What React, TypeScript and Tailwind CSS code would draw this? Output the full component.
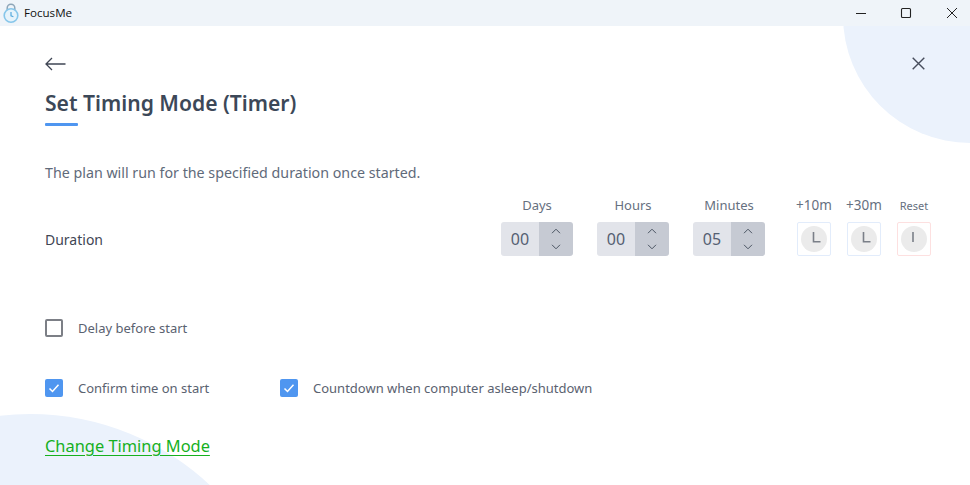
import React from "react";

const font = { fontFamily: '"Noto Sans", "Open Sans", sans-serif' };

function Spinner({ label, value }: { label: string; value: string }) {
  return (
    <div className="flex flex-col items-center w-[72px]">
      <div className="text-[13px] leading-[18px] text-[#667080] h-[18px] mb-[8px]">{label}</div>
      <div className="flex w-[72px] h-[34px] rounded-[3px] overflow-hidden">
        <div className="w-[38px] bg-[#e2e4ea] flex items-center justify-center text-[16px] text-[#556072]">{value}</div>
        <div className="w-[34px] bg-[#c6cad3] flex flex-col items-center justify-center gap-[10px]">
          <svg width="10" height="6" viewBox="0 0 10 6" fill="none" stroke="#4b5563" strokeWidth="1"><path d="M1 5.2 5 1.2 9 5.2" /></svg>
          <svg width="10" height="6" viewBox="0 0 10 6" fill="none" stroke="#4b5563" strokeWidth="1"><path d="M1 .8 5 4.8 9 .8" /></svg>
        </div>
      </div>
    </div>
  );
}

function Quick({ label, kind, small }: { label: string; kind: "l" | "i"; small?: boolean }) {
  const border = kind === "i" ? "border-[#fde0e0]" : "border-[#e2ecfb]";
  return (
    <div className="flex flex-col items-center w-[34px]">
      <div className={`h-[18px] mb-[8px] whitespace-nowrap leading-[18px] text-[#667080] ${small ? "text-[11px] pt-[1px]" : "text-[13.5px]"}`}>{label}</div>
      <div className={`w-[34px] h-[34px] border ${border} rounded-[2px] flex items-center justify-center`}>
        <div className="w-[26px] h-[26px] rounded-full bg-[#ebebeb] flex items-center justify-center">
          <svg width="26" height="26" viewBox="0 0 26 26" fill="none" stroke="#7a7f88" strokeWidth="1.6">
            {kind === "l" ? <path d="M12.5 6v9.7h7" /> : <path d="M12 6v10" />}
          </svg>
        </div>
      </div>
    </div>
  );
}

function Check({ checked }: { checked: boolean }) {
  return checked ? (
    <div className="w-[18px] h-[18px] rounded-[2px] bg-[#4f96f0] flex items-center justify-center shrink-0">
      <svg width="12" height="12" viewBox="0 0 12 12" fill="none" stroke="#ffffff" strokeWidth="1.5"><path d="M1.5 6.5 4.5 9.5 10.5 2.8" /></svg>
    </div>
  ) : (
    <div className="w-[18px] h-[18px] rounded-[2px] border-2 border-[#7c7f86] bg-white shrink-0" />
  );
}

export default function App() {
  return (
    <div className="relative w-[970px] h-[485px] bg-white overflow-hidden flex flex-col" style={font}>
      <div className="absolute left-[843px] top-[-111px] w-[254px] h-[254px] rounded-full bg-[#ebf2fc]" />
      <div className="absolute left-[-233px] top-[414px] w-[526px] h-[526px] rounded-full bg-[#ebf2fc]" />

      <header className="relative h-[26px] bg-[#eff4f9] flex items-center shrink-0">
        <svg className="ml-[3px]" width="16" height="22" viewBox="0 0 16 22" fill="none">
          <path d="M4.2 9V6a3.8 3.8 0 0 1 7.6 0v3" stroke="#8ea6b8" strokeWidth="1.5" />
          <circle cx="8" cy="13.5" r="6.8" stroke="#86c6ea" strokeWidth="1.6" fill="#e6f3fb" />
          <path d="M8 10v3.8l2.4 1" stroke="#56a9dc" strokeWidth="1.2" />
        </svg>
        <span className="ml-[5px] text-[11.6px] text-[#111111]" style={{ fontFamily: '"Open Sans", sans-serif' }}>FocusMe</span>
        <div className="ml-auto flex items-center">
          <svg width="12" height="12" viewBox="0 0 12 12" fill="none" stroke="#222" strokeWidth="1" className="mr-[33px]"><path d="M1 6.5h10" /></svg>
          <svg width="12" height="12" viewBox="0 0 12 12" fill="none" stroke="#222" strokeWidth="1.1" className="mr-[34px]"><rect x="1.5" y="1.5" width="9" height="9" rx="1" /></svg>
          <svg width="12" height="12" viewBox="0 0 12 12" fill="none" stroke="#222" strokeWidth="1" className="mr-[12px]"><path d="M1 1l10 10M11 1 1 11" /></svg>
        </div>
      </header>

      <main className="relative flex-1 pl-[45px] pr-[39px] flex flex-col">
        <div className="flex items-center justify-between pt-[28px] h-[47px] pr-[6px]">
          <svg width="21" height="14" viewBox="0 0 21 14" fill="none" stroke="#3f4654" strokeWidth="1.3"><path d="M20.5 7H1M7 1 1 7l6 6" /></svg>
          <svg width="13" height="13" viewBox="0 0 13 13" fill="none" stroke="#474d5c" strokeWidth="1.4"><path d="M.7.7l11.6 11.6M12.3.7.7 12.3" /></svg>
        </div>
        <h1 className="mt-[15px] text-[21.1px] leading-[30px] font-semibold text-[#3c4858]">Set Timing Mode (Timer)</h1>
        <div className="mt-[5px] w-[33px] h-[3px] rounded-[1px] bg-[#4f96f0]" />
        <p className="mt-[37px] text-[14.25px] leading-[20px] text-[#5f6a7a]">The plan will run for the specified duration once started.</p>

        <div className="mt-[13px] flex items-end">
          <div className="w-[456px] h-[34px] flex items-center text-[14px] text-[#3f4654]">Duration</div>
          <div className="flex gap-[24px]">
            <Spinner label="Days" value="00" />
            <Spinner label="Hours" value="00" />
            <Spinner label="Minutes" value="05" />
          </div>
          <div className="ml-[32px] flex gap-[16px]">
            <Quick label="+10m" kind="l" />
            <Quick label="+30m" kind="l" />
            <Quick label="Reset" kind="i" small />
          </div>
        </div>

        <label className="mt-[63px] flex items-center gap-[15px] text-[13px] leading-[18px] text-[#5a6270]">
          <Check checked={false} />
          <span>Delay before start</span>
        </label>

        <div className="mt-[42px] flex items-center text-[13px] leading-[18px] text-[#5a6270]">
          <div className="w-[235px] flex items-center gap-[15px]">
            <Check checked />
            <span>Confirm time on start</span>
          </div>
          <div className="flex items-center gap-[15px]">
            <Check checked />
            <span>Countdown when computer asleep/shutdown</span>
          </div>
        </div>

        <a className="mt-[38px] w-fit text-[16.4px] leading-[22px] text-[#16b01e] underline underline-offset-[3px]">Change Timing Mode</a>
      </main>
    </div>
  );
}
